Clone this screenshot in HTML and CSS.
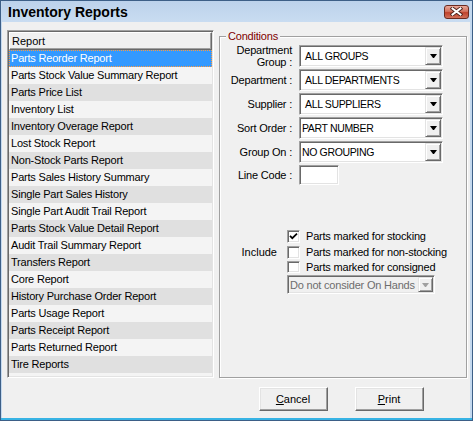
FILE: index.html
```html
<!DOCTYPE html>
<html>
<head>
    <title>Inventory Reports</title>
    <link rel="stylesheet" href="styles.css">
</head>
<body>

<div class="window">
    <!-- Naslovna traka -->
    <div class="titlebar">
        <span class="title">Inventory Reports</span>
        <button class="close" type="button">
            <svg width="13" height="9" viewBox="0 0 13 9">
                <path d="M2.5 1.5 L10.5 7.5 M10.5 1.5 L2.5 7.5" stroke="#4a2019" stroke-width="3.8" stroke-linecap="square"/>
                <path d="M2.5 1.5 L10.5 7.5 M10.5 1.5 L2.5 7.5" stroke="#fff" stroke-width="2" stroke-linecap="square"/>
            </svg>
        </button>
    </div>

    <div class="client">
        <div class="main">
            <!-- Lista izvestaja -->
            <div class="listbox">
                <div class="list-header">Report</div>
                <ul class="report-list">
                    <li class="selected">Parts Reorder Report</li>
                    <li>Parts Stock Value Summary Report</li>
                    <li>Parts Price List</li>
                    <li>Inventory List</li>
                    <li>Inventory Overage Report</li>
                    <li>Lost Stock Report</li>
                    <li>Non-Stock Parts Report</li>
                    <li>Parts Sales History Summary</li>
                    <li>Single Part Sales History</li>
                    <li>Single Part Audit Trail Report</li>
                    <li>Parts Stock Value Detail Report</li>
                    <li>Audit Trail Summary Report</li>
                    <li>Transfers Report</li>
                    <li>Core Report</li>
                    <li>History Purchase Order Report</li>
                    <li>Parts Usage Report</li>
                    <li>Parts Receipt Report</li>
                    <li>Parts Returned Report</li>
                    <li>Tire Reports</li>
                </ul>
            </div>

            <!-- Uslovi -->
            <div class="conditions">
                <div class="group-title">Conditions</div>

                <div class="row">
                    <label class="lbl two-line">Department<br>Group :</label>
                    <div class="combo"><span class="value">ALL GROUPS</span><span class="drop"></span></div>
                </div>
                <div class="row">
                    <label class="lbl">Department :</label>
                    <div class="combo"><span class="value">ALL DEPARTMENTS</span><span class="drop"></span></div>
                </div>
                <div class="row">
                    <label class="lbl">Supplier :</label>
                    <div class="combo"><span class="value">ALL SUPPLIERS</span><span class="drop"></span></div>
                </div>
                <div class="row">
                    <label class="lbl">Sort Order :</label>
                    <div class="combo tight"><span class="value">PART NUMBER</span><span class="drop"></span></div>
                </div>
                <div class="row">
                    <label class="lbl">Group On :</label>
                    <div class="combo tight"><span class="value">NO GROUPING</span><span class="drop"></span></div>
                </div>
                <div class="row line-row">
                    <label class="lbl">Line Code :</label>
                    <div class="textbox"></div>
                </div>

                <div class="include">
                    <span class="include-lbl">Include</span>
                    <div class="checks">
                        <div class="check">
                            <span class="box">
                                <svg width="11" height="11" viewBox="0 0 11 11"><path d="M2 4.8 L4.3 7.2 L9 2.6" fill="none" stroke="#000" stroke-width="1.7"/></svg>
                            </span>
                            Parts marked for stocking
                        </div>
                        <div class="check"><span class="box"></span>Parts marked for non-stocking</div>
                        <div class="check"><span class="box"></span>Parts marked for consigned</div>
                        <div class="combo disabled"><span class="value">Do not consider On Hands</span><span class="drop"></span></div>
                    </div>
                </div>
            </div>
        </div>

        <div class="buttons">
            <button class="btn" type="button"><u>C</u>ancel</button>
            <button class="btn" type="button"><u>P</u>rint</button>
        </div>
    </div>
</div>

</body>
</html>
```

FILE: styles.css
```css
/* Osnovno */
body {
    margin: 0;
    font-family: "Liberation Sans", Arial, sans-serif;
    font-size: 11px;
    color: #000;
}

/* Prozor */
.window {
    box-sizing: border-box;
    width: 473px;
    height: 421px;
    border: 1px solid #3d5f87;
    padding: 0 2px 2px 1px;
    background: #c4d9ef;
    box-shadow: inset 0 -2px #37b3e4;
    display: flex;
    flex-direction: column;
}

.titlebar {
    height: 21px;
    display: flex;
    align-items: center;
    padding-left: 6px;
    background: linear-gradient(#bcd2eb, #c9dcf1);
}

.title {
    font-size: 14px;
    font-weight: bold;
}

.close {
    margin-left: auto;
    margin-right: 1px;
    width: 25px;
    height: 14px;
    padding: 0;
    border: 1px solid #6b2b20;
    border-radius: 3px;
    background: linear-gradient(#e9a899, #d2725e 45%, #c0432c 55%, #d0705a);
    display: flex;
    align-items: center;
    justify-content: center;
}

.close svg {
    display: block;
}

.client {
    flex: 1;
    background: #f0f0f0;
    padding: 8px 0 0 5px;
}

.main {
    display: flex;
    gap: 5px;
    height: 348px;
}

/* Lista */
.listbox {
    box-sizing: border-box;
    width: 207px;
    border: 1px solid;
    border-color: #a0a0a0 #fff #fff #a0a0a0;
    box-shadow: inset 1px 1px #696969, inset -1px -1px #e3e3e3;
    background: #f4f4f4;
    padding: 1px;
}

.list-header {
    box-sizing: border-box;
    height: 18px;
    line-height: 16px;
    padding-left: 2px;
    border: 1px solid;
    border-color: #fff #696969 #696969 #fff;
    box-shadow: inset -1px -1px #a0a0a0;
    background: #f0f0f0;
}

.report-list {
    list-style: none;
    margin: 0;
    padding: 0;
}

.report-list li {
    height: 17px;
    line-height: 17px;
    padding-left: 2px;
    letter-spacing: -0.2px;
    white-space: nowrap;
}

.report-list li:nth-child(odd) {
    background: #e0e0e0;
}

.report-list li.selected {
    background: #3399ff;
    color: #fff;
    outline: 1px dotted #ff9a3c;
    outline-offset: -1px;
}

/* Grupa uslova */
.conditions {
    box-sizing: border-box;
    width: 248px;
    height: 342px;
    margin-top: 6px;
    padding-left: 4px;
    border: 1px solid #a0a0a0;
    box-shadow: inset 1px 1px #fff, 1px 1px #fff;
}

.group-title {
    display: table;
    margin: -7px 0 2px 2px;
    padding: 0 2px;
    line-height: 13px;
    background: #f0f0f0;
    color: #800000;
    letter-spacing: -0.2px;
}

.row {
    display: flex;
    align-items: center;
    height: 22px;
    margin-bottom: 2px;
}

.lbl {
    width: 68px;
    margin-right: 7px;
    text-align: right;
    letter-spacing: -0.2px;
    white-space: nowrap;
}

.two-line {
    line-height: 12px;
}

.line-row {
    height: 20px;
    margin-top: 1px;
}

/* Padajuce liste */
.combo {
    box-sizing: border-box;
    width: 144px;
    height: 22px;
    display: flex;
    align-items: center;
    border: 1px solid;
    border-color: #a0a0a0 #fff #fff #a0a0a0;
    box-shadow: inset 1px 1px #696969, inset -1px -1px #e3e3e3;
    background: #fff;
}

.combo .value {
    flex: 1;
    padding-left: 5px;
    font-size: 10.5px;
    letter-spacing: -0.35px;
    white-space: nowrap;
}

.combo.tight .value {
    padding-left: 2px;
}

.drop {
    box-sizing: border-box;
    width: 16px;
    height: 18px;
    margin-right: 1px;
    border: 1px solid;
    border-color: #e3e3e3 #696969 #696969 #e3e3e3;
    box-shadow: inset 1px 1px #fff, inset -1px -1px #a0a0a0;
    background: #f0f0f0;
    display: flex;
    align-items: center;
    justify-content: center;
}

.drop::after {
    content: "";
    width: 1px;
    border-top: 4px solid #000;
    border-left: 3px solid transparent;
    border-right: 3px solid transparent;
}

.combo.disabled {
    width: 148px;
    height: 19px;
    margin-top: 0;
    background: #f0f0f0;
    color: #6d6d6d;
}

.combo.disabled .value {
    font-size: 11px;
    letter-spacing: -0.2px;
    padding-left: 2px;
}

.combo.disabled .drop {
    height: 15px;
    width: 15px;
}

.combo.disabled .drop::after {
    border-top-color: #a0a0a0;
}

.textbox {
    box-sizing: border-box;
    width: 40px;
    height: 20px;
    border: 1px solid;
    border-color: #a0a0a0 #fff #fff #a0a0a0;
    box-shadow: inset 1px 1px #696969, inset -1px -1px #e3e3e3;
    background: #fff;
}

/* Include sekcija */
.include {
    display: flex;
    margin-top: 43px;
}

.include-lbl {
    width: 53px;
    margin-right: 10px;
    padding-top: 16px;
    line-height: 16px;
    text-align: right;
}

.check {
    display: flex;
    align-items: center;
    height: 16px;
    letter-spacing: -0.2px;
    white-space: nowrap;
}

.check:nth-child(3) {
    height: 15px;
    align-items: flex-start;
    padding-top: 1px;
    box-sizing: border-box;
}

.box {
    box-sizing: border-box;
    width: 13px;
    height: 13px;
    margin-right: 6px;
    border: 1px solid;
    border-color: #a0a0a0 #fff #fff #a0a0a0;
    box-shadow: inset 1px 1px #696969, inset -1px -1px #e3e3e3;
    background: #fff;
}

.check:nth-child(3) .box {
    height: 12px;
}

.box svg {
    display: block;
}

/* Dugmad */
.buttons {
    display: flex;
    justify-content: center;
    gap: 27px;
    width: 248px;
    margin: 9px 0 0 210px;
}

.btn {
    box-sizing: border-box;
    width: 69px;
    height: 24px;
    padding: 0;
    font-family: inherit;
    font-size: 11px;
    color: #000;
    background: #f0f0f0;
    border: 1px solid;
    border-color: #fff #696969 #696969 #fff;
    box-shadow: inset -1px -1px #a0a0a0, inset 1px 1px #e3e3e3;
}
```
